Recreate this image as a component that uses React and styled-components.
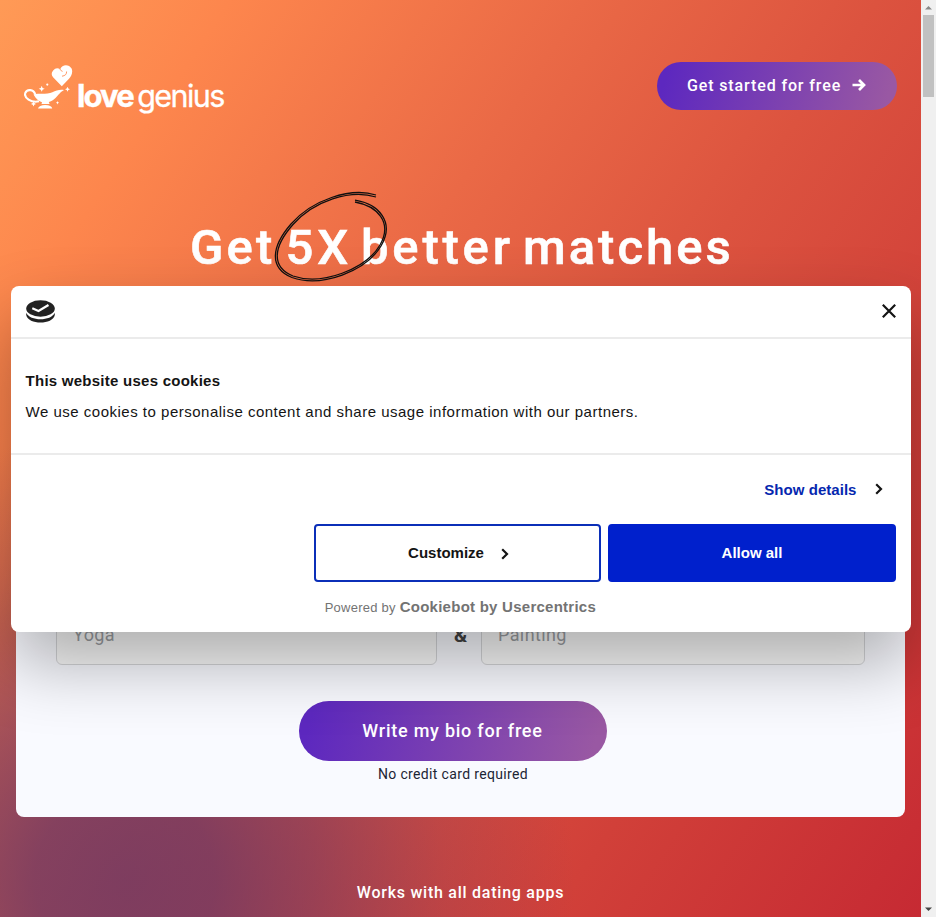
import React from "react";
import styled, { createGlobalStyle } from "styled-components";

const Global = createGlobalStyle`
  * { box-sizing: border-box; }
  html, body { margin: 0; overflow: hidden; }
  button, input { font: inherit; }
`;
const rounded = `Roboto, "Open Sans", sans-serif`;

const Screen = styled.div`
  display: flex; width: 936px; height: 917px; overflow: hidden;
  font-family: ${rounded};
`;
const Page = styled.main`
  position: relative; width: 921px; height: 917px; overflow: hidden;
  display: flex; flex-direction: column;
  background:
    radial-gradient(circle at 125px 880px, rgba(94,50,104,.76) 0, rgba(94,50,104,.72) 90px, rgba(94,50,104,.52) 190px, rgba(94,50,104,.2) 320px, rgba(94,50,104,0) 450px),
    linear-gradient(124deg, #ff9a56 0%, #fd864d 15%, #ea6946 38%, #dc533f 57%, #d14039 76%, #c62a33 100%);
`;
const Header = styled.header`
  display: flex; justify-content: space-between; align-items: flex-start;
  padding: 62px 24px 0; height: 192px; flex: none;
`;
const Logo = styled.div`
  display: flex; padding-top: 2px; color: #fff; height: 52px;
`;
const Wordmark = styled.span`
  display: flex; align-items: baseline; font-family: Inter, sans-serif; color: #fff;
  line-height: 63px; margin-left: 3px; white-space: nowrap;
`;
const Love = styled.strong`font-size: 31px; font-weight: 700; letter-spacing: -1.9px; -webkit-text-stroke: .4px #fff;`;
const Genius = styled.span`font-size: 30.5px; font-weight: 400; letter-spacing: -1.6px; margin-left: 4.5px; -webkit-text-stroke: .3px #fff;`;
const Pill = styled.button`
  display: flex; align-items: center; justify-content: center; gap: ${p => p.$gap || 0}px;
  width: ${p => p.$w}px; height: ${p => p.$h}px; border: 0; border-radius: 40px; padding: 0 1px 2px 0;
  color: #fff; font-weight: 500; font-size: ${p => p.$size}px; letter-spacing: ${p => p.$ls}px;
  background: linear-gradient(105deg, #5d28bf 5%, #9958a3 95%);
`;
const Hero = styled.section`
  position: relative; height: 108px; flex: none;
`;
const Headline = styled.h1`
  margin: 28px 0 0 190px; font-size: 49px; line-height: 56px; font-weight: 500;
  color: #fff; white-space: nowrap; -webkit-text-stroke: .6px #fff;
  display: flex;
`;
const Word = styled.span`width: ${p => p.$w}px; letter-spacing: ${p => p.$ls}px; white-space: pre; flex: none;`;
const Loop = styled.svg`position: absolute; left: 270px; top: -4px;`;
const Card = styled.section`
  margin: 260px 16px 0; height: 257px; flex: none; border-radius: 8px; background: #f9faff;
  display: flex; flex-direction: column; align-items: center;
  padding: 45px 40px 0;
`;
const Fields = styled.div`
  display: grid; grid-template-columns: 381px 44px 384px; align-self: stretch; height: 60px;
  align-items: center; text-align: center; font-weight: 700; font-size: 20px; color: #444;
`;
const And = styled.span`padding-left: 3px;`;
const Field = styled.div`
  height: 60px; border: 1px solid #d4d5d8; border-radius: 6px; background: #f9f9f9;
  text-align: left; padding: 0 16px; line-height: 58px; font-weight: 400; font-size: 18px; letter-spacing: .4px; color: #9a9da1;
`;
const Submit = styled.div`margin: 36px 15px 0 0; display: flex; flex-direction: column; align-items: center;`;
const Note = styled.p`margin: 3px 0 0; font-size: 14px; line-height: 20px; color: #1c2435; letter-spacing: .35px;`;
const Works = styled.p`
  margin: 64px 0 0; text-align: center; font-size: 16px; line-height: 24px; font-weight: 500; color: #fff; letter-spacing: .75px;
`;

const Dialog = styled.section`
  position: absolute; left: 11px; top: 285.5px; width: 900px; height: 346px;
  background: #fff; border-radius: 8px; box-shadow: 0 32px 68px rgba(0,0,0,.3);
  font-family: "Liberation Sans", Arial, sans-serif; color: #141414;
  display: flex; flex-direction: column;
`;
const DialogHead = styled.div`
  display: flex; justify-content: space-between; align-items: center; height: 53px; flex: none;
  padding: 0 15px; border-bottom: 2px solid #ebebeb;
`;
const DialogBody = styled.div`
  height: 116px; flex: none; padding: 32px 14.6px 0; border-bottom: 2px solid #ebebeb;
`;
const Title = styled.h2`margin: 0; font-size: 15px; line-height: 20px; font-weight: 700; letter-spacing: .25px;`;
const Copy = styled.p`margin: 11px 0 0; font-size: 15px; line-height: 20px; letter-spacing: .5px;`;
const Details = styled.a`
  display: flex; align-items: center; justify-content: flex-end; gap: 18px; height: 69px; padding: 0 28.5px 0 0;
  color: #0527af; font-size: 15px; font-weight: 700; letter-spacing: .04px;
`;
const Actions = styled.div`
  display: grid; grid-template-columns: 287px 288px; gap: 7px; justify-content: end; padding-right: 15px; height: 58px;
`;
const Action = styled.button`
  display: flex; align-items: center; justify-content: center; gap: 17px; padding: 0 0 1px;
  border: 2px solid ${p => (p.$primary ? "#0020cc" : "#0b2fb8")}; border-radius: 4px;
  background: ${p => (p.$primary ? "#0020cc" : "#fff")}; color: ${p => (p.$primary ? "#fff" : "#141414")};
  font-size: 15px; font-weight: 700;
  svg { margin: 3px -2px 0 0; }
`;
const Powered = styled.p`
  margin: 15px 0 0 313.7px; font-size: 13px; line-height: 20px; color: #737373; letter-spacing: .25px;
  strong { font-size: 15px; }
`;
const Scrollbar = styled.aside`
  width: 15px; height: 917px; background: #f0f0f0; display: flex; flex-direction: column; align-items: center; justify-content: space-between;
`;
const Thumb = styled.div`width: 11px; height: 82px; background: #c1c1c1; margin-bottom: auto;`;
const Arrow = styled.svg`display: block; width: 15px; height: 15px; flex: none;`;

const Lamp = () => (
  <svg width="50" height="52" viewBox="24 64 50 52" fill="currentColor">
    <path d="M61.800 86.200 53.300 77.600A5.500 5.500 0 0 1 60.200 69.200C62 64 69 63.800 71.600 68.500C73.200 72.400 71.300 76.100 69 78.700Z" />
    <path d="M59.900 69Q60.500 70.800 62.600 71.400" fill="none" stroke="#ff8c52" strokeWidth=".8" />
    <path d="M66.600 71.500Q66.800 75.600 62 76.200" fill="none" stroke="#ff8c52" strokeWidth=".9" />
    <path d="M33.500 94.600C36 99.300 39 101.600 42 102.200L41.500 104H49.600L48.800 102C55 100.200 57.200 95.600 61 92Q62.500 90.900 64 90C59.800 89.200 56 90.500 52.400 92.200C48.500 94 42 94 38.800 93.700Q36 93.400 33.500 94.600Z" />
    <path d="M39 101.300C31 103.200 23.700 97.400 25.300 93C27 88.700 33.600 89.200 35.300 94.500" fill="none" stroke="currentColor" strokeWidth="2.100" />
    <path d="M38 108.500Q39 104.900 45.200 104.900Q51.600 104.900 52.200 108.500Z" />
    <path d="M41.700 85.800l.9 2.100 2.100.9-2.100.9-.9 2.100-.9-2.100-2.100-.9 2.100-.9ZM67.500 86.800l.8 1.700 1.700.8-1.700.8-.8 1.700-.8-1.700-1.700-.8 1.700-.8ZM33.500 101.400l.8 1.700 1.700.8-1.700.8-.8 1.700-.8-1.700-1.700-.8 1.700-.8ZM57.500 101l.5 1.200 1.200.5-1.200.5-.5 1.200-.5-1.200-1.200-.5 1.200-.5Z" />
    <circle cx="47.300" cy="84.600" r="1.100" />
  </svg>
);
const Chevron = () => (
  <svg width="8" height="12" viewBox="0 0 8 12"><path d="M1.200 1.200 6 6 1.200 10.800" fill="none" stroke="#141414" strokeWidth="2.200" /></svg>
);

export default function App() {
  return (
    <Screen>
      <Global />
      <Page>
        <Header>
          <Logo><Lamp /><Wordmark><Love>love</Love><Genius>genius</Genius></Wordmark></Logo>
          <Pill $w={240} $h={48} $size={16} $ls={0.88} $gap={11}>
            Get started for free
            <svg width="14" height="12" viewBox="0 0 14 12"><path d="M.500 6H12M7 1l5 5-5 5" fill="none" stroke="#fff" strokeWidth="2.700" /></svg>
          </Pill>
        </Header>
        <Hero>
          <Loop width="122" height="96" viewBox="270 188 122 96" fill="none" stroke="#101010" strokeWidth="1.300">
            <path d="M376 195C350 187 312 200 291 224C271 247 269 268 292 277.500C322 288 366 271 381 246C395 222 379 204 355 200.200" />
            <path d="M376 197C350 189 314 201 293 224.500C273 247 271 267 293 276C322 286 366 269 380 245C393 222 377 206 355 202" />
          </Loop>
          <Headline>
            <Word $w={95.5} $ls={3.2}>Get </Word><Word $w={75.5} $ls={4}>5X </Word>
            <Word $w={162} $ls={3.8}>better </Word><Word $w={210} $ls={3}>matches</Word>
          </Headline>
        </Hero>
        <Card>
          <Fields><Field>Yoga</Field><And>&amp;</And><Field>Painting</Field></Fields>
          <Submit>
            <Pill $w={308} $h={60} $size={18} $ls={0.76}>Write my bio for free</Pill>
            <Note>No credit card required</Note>
          </Submit>
        </Card>
        <Works>Works with all dating apps</Works>
        <Dialog>
          <DialogHead>
            <svg width="29" height="23" viewBox="0 0 29 23" fill="#222">
              <ellipse cx="14.500" cy="8.500" rx="14.300" ry="8.300" />
              <path d="M.200 12.800C4 21.500 25 21.500 28.800 12.800V15C27 25 2 25 .200 15Z" />
              <path d="M6.300 8.300 12.500 11 22.500 5" fill="none" stroke="#fff" strokeWidth="2.200" />
            </svg>
            <svg width="14" height="14" viewBox="0 0 14 14"><path d="M.800.800 13.200 13.200M13.200.800.800 13.200" stroke="#141414" strokeWidth="2.200" /></svg>
          </DialogHead>
          <DialogBody>
            <Title>This website uses cookies</Title>
            <Copy>We use cookies to personalise content and share usage information with our partners.</Copy>
          </DialogBody>
          <Details>Show details<Chevron /></Details>
          <Actions><Action>Customize<Chevron /></Action><Action $primary>Allow all</Action></Actions>
          <Powered>Powered by <strong>Cookiebot by Usercentrics</strong></Powered>
        </Dialog>
      </Page>
      <Scrollbar>
        <Arrow viewBox="0 0 15 15"><path d="M4 9.500 7.500 6 11 9.500Z" fill="#888" /></Arrow>
        <Thumb />
        <Arrow viewBox="0 0 15 15"><path d="M4 5.500 7.500 9 11 5.500Z" fill="#444" /></Arrow>
      </Scrollbar>
    </Screen>
  );
}
